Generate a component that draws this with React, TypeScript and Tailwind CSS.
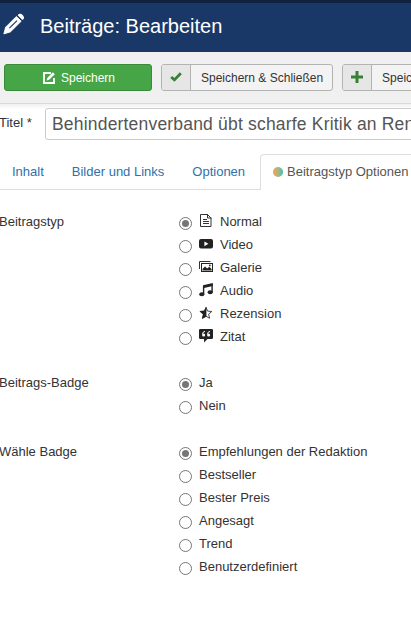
import { useState } from 'react';
import type { ReactNode } from 'react';

const PencilIcon = () => (
  <svg viewBox="0 0 22 22" className="h-[22px] w-[22px] shrink-0">
    <path d="M0.8 20.9 L2.6 14.2 L13.4 3.4 L18.2 8.2 L7.4 18.9 Z" fill="#fff" stroke="#fff" strokeWidth="0.8" strokeLinejoin="round" />
    <path d="M14.6 2.2 L15.8 1 C18 -0.6 22.3 3.6 20.6 5.9 L19.4 7 Z" fill="#fff" />
    <path d="M6.4 15.2 L14 7.6" stroke="#1a3867" strokeWidth="1.2" />
  </svg>
);

const EditIcon = () => (
  <svg viewBox="0 0 12 12" className="h-3 w-3 shrink-0">
    <path d="M8 1H1V11H11V6" fill="none" stroke="#fff" strokeWidth="1.9" />
    <path d="M3.6 8.5 L4.3 5.9 L9.8 0.3 L11.8 2.3 L6.2 7.8 Z" fill="#fff" />
  </svg>
);

const CheckIcon = () => (
  <svg viewBox="0 0 12 12" className="h-3 w-3">
    <path d="M1.2 6 L4.4 8.9 L10.8 2.3" fill="none" stroke="#378137" strokeWidth="2.8" />
  </svg>
);

const PlusIcon = () => (
  <svg viewBox="0 0 12 12" className="h-3 w-3">
    <path d="M6 0V12M0 6H12" stroke="#378137" strokeWidth="3" />
  </svg>
);

const FileIcon = () => (
  <svg viewBox="0 0 14 14" className="h-3.5 w-3.5">
    <path d="M1.5 0.5H8.5L12 4V12.5H1.5Z" fill="none" stroke="#333" />
    <path d="M8.5 0V4H12.5" fill="none" stroke="#333" />
    <path d="M4 5.5H8M4 7.5H10M4 9.5H10" stroke="#333" />
  </svg>
);

const VideoIcon = () => (
  <svg viewBox="0 0 14 14" className="h-3.5 w-3.5">
    <rect x="0" y="2" width="14" height="9.5" rx="2" fill="#222" />
    <path d="M5.4 4.4V9.2L9.4 6.8Z" fill="#fff" />
  </svg>
);

const GalleryIcon = () => (
  <svg viewBox="0 0 14 14" className="h-3.5 w-3.5">
    <path d="M0.5 9V1.5H11.5" fill="none" stroke="#333" />
    <rect x="2.5" y="3.5" width="11" height="8" fill="#fff" stroke="#222" />
    <path d="M3.5 10.5V9L6 6.4L8.2 8.6L10.3 6.8L12.6 9V10.5Z" fill="#222" />
    <circle cx="10.8" cy="5.4" r="0.9" fill="#222" />
  </svg>
);

const AudioIcon = () => (
  <svg viewBox="0 0 14 14" className="h-3.5 w-3.5">
    <path d="M4 2.2L13.8 0V3L4 5.2Z" fill="#222" />
    <path d="M4.6 3V11M13.1 1V9" stroke="#222" strokeWidth="1.4" />
    <ellipse cx="2.8" cy="11.2" rx="2.6" ry="2" fill="#222" />
    <ellipse cx="11.2" cy="9.3" rx="2.6" ry="2" fill="#222" />
  </svg>
);

const StarIcon = () => (
  <svg viewBox="0 0 14 14" className="h-3.5 w-3.5">
    <path d="M7 1.4L8.6 5.1L12.8 5.5L9.6 8.2L10.6 12.3L7 10.2L3.4 12.3L4.4 8.2L1.2 5.5L5.4 5.1Z" fill="none" stroke="#333" strokeWidth="0.9" />
    <path d="M7.4 0.5V10.6L3 13L4.1 8.4L0.4 5.1L5.2 4.7Z" fill="#222" />
  </svg>
);

const QuoteIcon = () => (
  <svg viewBox="0 0 14 14" className="h-3.5 w-3.5">
    <path d="M1.2 0H12.8Q14 0 14 1.2V8.8Q14 10 12.8 10H8.5L5 13.4V10H1.2Q0 10 0 8.8V1.2Q0 0 1.2 0Z" fill="#222" />
    <path d="M6 2.4Q3.5 2.6 3.5 5.4M11 2.4Q8.5 2.6 8.5 5.4" fill="none" stroke="#fff" strokeWidth="1" />
    <circle cx="4.6" cy="6" r="1.5" fill="#fff" />
    <circle cx="9.6" cy="6" r="1.5" fill="#fff" />
  </svg>
);

type Option = { label: string; icon?: ReactNode };

const articleTypes: Option[] = [
  { label: 'Normal', icon: <FileIcon /> },
  { label: 'Video', icon: <VideoIcon /> },
  { label: 'Galerie', icon: <GalleryIcon /> },
  { label: 'Audio', icon: <AudioIcon /> },
  { label: 'Rezension', icon: <StarIcon /> },
  { label: 'Zitat', icon: <QuoteIcon /> },
];

const badgeStates: Option[] = [{ label: 'Ja' }, { label: 'Nein' }];

const badges: Option[] = [
  { label: 'Empfehlungen der Redaktion' },
  { label: 'Bestseller' },
  { label: 'Bester Preis' },
  { label: 'Angesagt' },
  { label: 'Trend' },
  { label: 'Benutzerdefiniert' },
];

const RadioGroup = ({ title, name, options }: { title: string; name: string; options: Option[] }) => {
  const [selected, setSelected] = useState(options[0].label);

  return (
    <div className="flex items-start">
      <div className="-ml-px w-[180px] shrink-0 leading-[23px]">{title}</div>
      <div role="radiogroup" aria-label={title}>
        {options.map((option) => (
          <label key={option.label} className="flex h-[23px] items-center whitespace-nowrap">
            <input
              type="radio"
              name={name}
              className="peer sr-only"
              checked={selected === option.label}
              onChange={() => setSelected(option.label)}
            />
            <span className="mt-1 mr-[7px] flex h-[13px] w-[13px] items-center justify-center rounded-full border border-[#767676] bg-white peer-checked:*:bg-[#767676]">
              <span className="h-[7px] w-[7px] rounded-full"></span>
            </span>
            {option.icon && <span className="-mt-0.5 mr-[7px]">{option.icon}</span>}
            <span>{option.label}</span>
          </label>
        ))}
      </div>
    </div>
  );
};

const ToolbarButton = ({ icon, label }: { icon: ReactNode; label: string }) => (
  <button className="flex h-[27px] shrink-0 overflow-hidden rounded-[3px] border border-[#b3b3b3] bg-[#f3f3f3] text-xs text-[#333]">
    <span className="flex h-full w-[29px] items-center justify-center border-r border-[#b3b3b3] bg-[#e6e6e6] pb-px">{icon}</span>
    <span className="pr-[9px] pl-2.5 leading-[27px] whitespace-nowrap">{label}</span>
  </button>
);

const App = () => {
  return (
    <div className="h-[622px] w-full overflow-hidden bg-white font-['Liberation_Sans',Arial,sans-serif] text-[13px] text-[#333]">
      <header className="flex h-[52px] items-center border-t-[3px] border-[#10223e] bg-[#1a3867] pb-1 pl-[3px] text-white">
        <div className="-mt-1">
          <PencilIcon />
        </div>
        <h1 className="ml-[15px] text-[20px]">Beiträge: Bearbeiten</h1>
      </header>

      <div className="flex h-[52px] items-center border-b border-[#d9d9d9] bg-[#f0f0f0] pl-1">
        <button className="flex h-[27px] w-[148px] shrink-0 items-center justify-center gap-[6px] rounded-[3px] border border-[#3a8a3a] bg-[#46a546] pl-0.5 text-xs text-white">
          <EditIcon />
          Speichern
        </button>
        <div className="ml-[9px] flex gap-[9px]">
          <ToolbarButton icon={<CheckIcon />} label="Speichern & Schließen" />
          <ToolbarButton icon={<PlusIcon />} label="Speichern & Neu" />
        </div>
      </div>

      <div className="flex h-9 items-end bg-gradient-to-b from-[#f0f0f0] to-white to-15%">
        <label htmlFor="title" className="-ml-px w-[46px] shrink-0 self-center pt-0.5">Titel *</label>
        <input
          id="title"
          className="h-8 w-[400px] shrink-0 rounded-[3px] border border-[#ccc] bg-white px-1.5 text-[17.5px] tracking-[0.19px] text-[#555] outline-none"
          defaultValue="Behindertenverband übt scharfe Kritik an Rentenplänen"
        />
      </div>

      <nav className="mt-[14px] flex h-9 border-b border-[#ddd] whitespace-nowrap text-[#3071a9]">
        <a href="#inhalt" className="ml-3 leading-9">Inhalt</a>
        <a href="#bilder" className="ml-7 leading-9">Bilder und Links</a>
        <a href="#optionen" className="ml-7 leading-9">Optionen</a>
        <a href="#beitragstyp" className="ml-[15px] flex h-9 w-[170px] shrink-0 items-center rounded-t border border-b-0 border-[#ddd] bg-white pb-0.5 pl-3 text-[#555]">
          <span className="mr-1 h-2.5 w-2.5 rounded-full bg-gradient-to-r from-[#f4a340] to-[#1fc0ae]"></span>
          Beitragstyp Optionen
        </a>
      </nav>

      <main className="mt-5 flex flex-col gap-[23px]">
        <RadioGroup title="Beitragstyp" name="type" options={articleTypes} />
        <RadioGroup title="Beitrags-Badge" name="badge" options={badgeStates} />
        <RadioGroup title="Wähle Badge" name="badge-kind" options={badges} />
      </main>
    </div>
  );
};

export default App;
